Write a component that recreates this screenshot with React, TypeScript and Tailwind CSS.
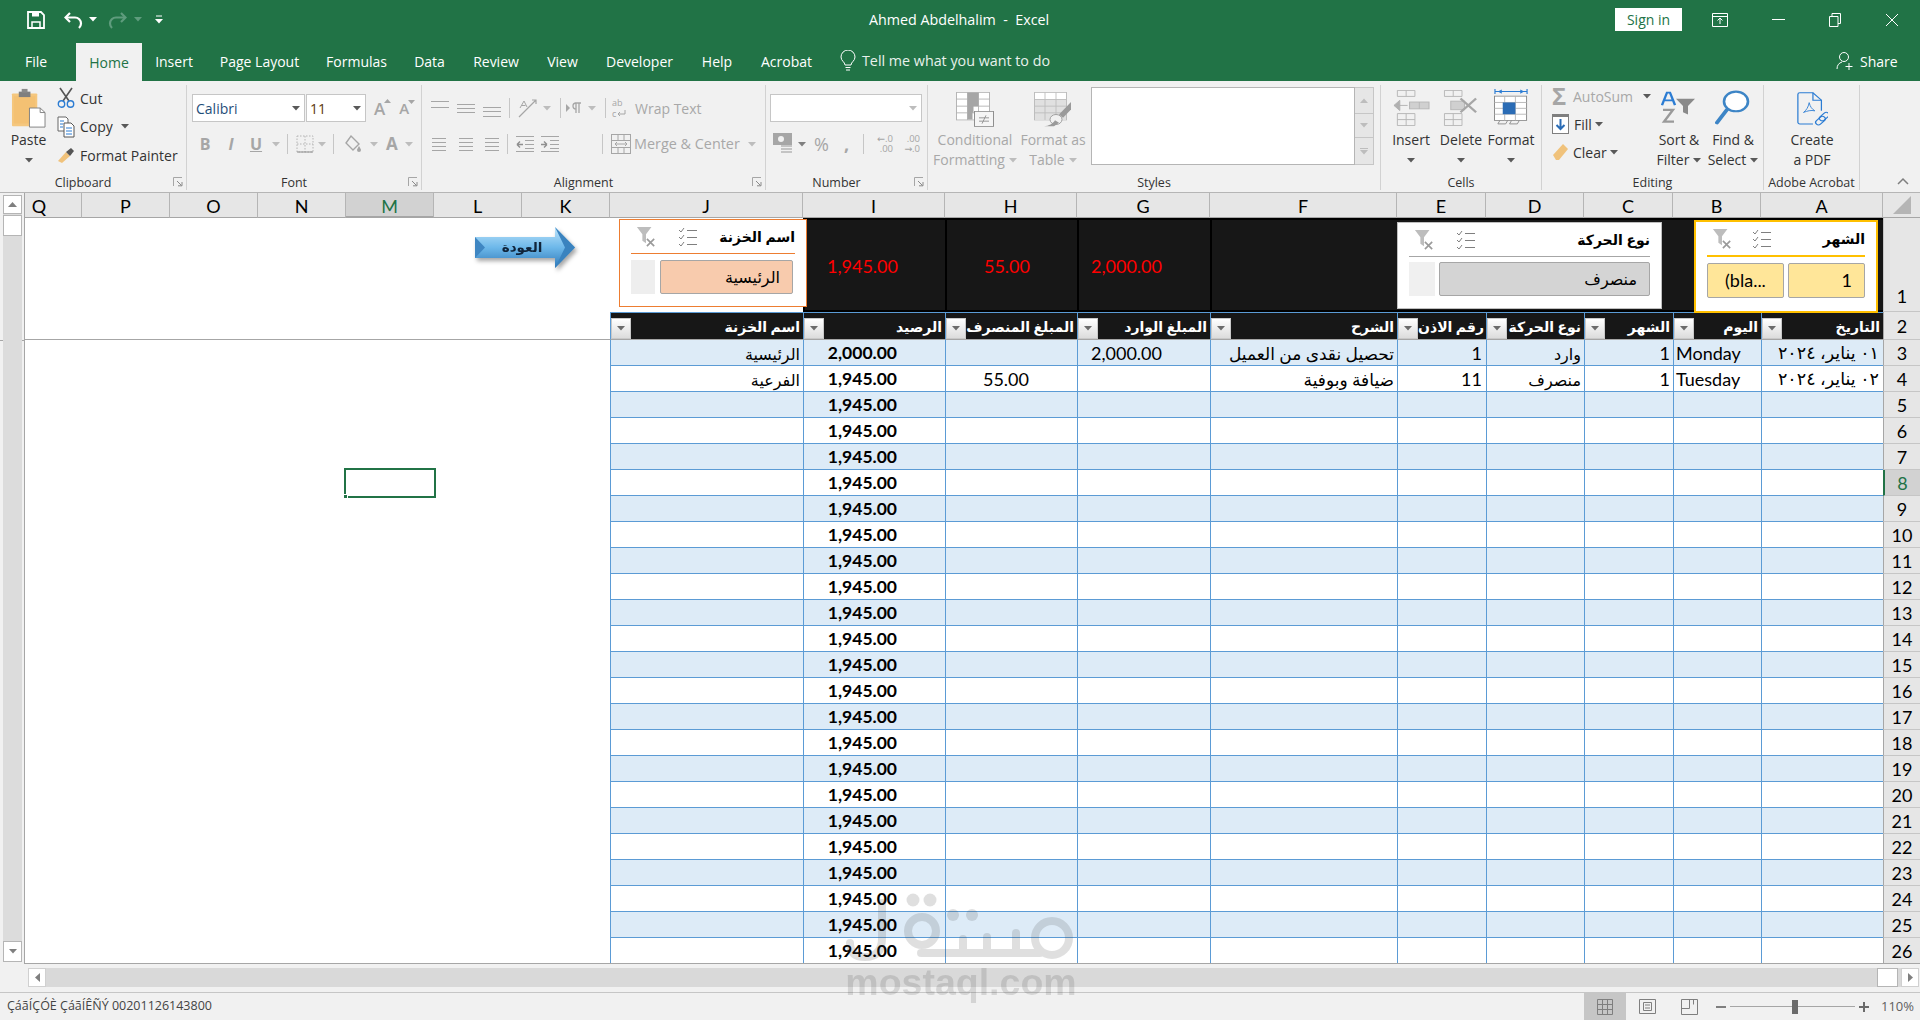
import React from "react";

const G = "#a6a6a6";
const cols = ["Q","P","O","N","M","L","K","J","I","H","G","F","E","D","C","B","A"];
const gridCols = "grid-cols-[57px_88px_88px_88px_88px_88px_88px_193px_142px_132px_133px_187px_89px_98px_89px_88px_122px_37px]";

const Caret = ({ c = "#595959", className = "" }: { c?: string; className?: string }) => (
  <svg width="8" height="5" viewBox="0 0 8 5" className={className}><path d="M0 0h8L4 4.5z" fill={c} /></svg>
);
const Dim = ({ className = "" }: { className?: string }) => <Caret c="#bdbdbd" className={className} />;
const VSep = ({ className = "" }: { className?: string }) => <div className={"w-px h-[20px] bg-[#c6c6c6] " + className} />;

const Lines = ({ ys, w = 20, h = 20, x1 = 1, x2 = 19, c = G, className = "" }: { ys: number[]; w?: number; h?: number; x1?: number; x2?: number; c?: string; className?: string }) => (
  <svg width={w} height={h} viewBox={"0 0 " + w + " " + h} className={className}>
    {ys.map((y, i) => <path key={i} d={"M" + x1 + " " + (y + 0.5) + "H" + x2} stroke={c} strokeWidth="1" />)}
  </svg>
);

const Launcher = () => (
  <svg width="10" height="10" viewBox="0 0 10 10" className="absolute right-[3px] top-[2px]">
    <path d="M.5 9V.5H9" stroke="#a6a6a6" fill="none" />
    <path d="M4 4l4.5 4.5M5 8.8h4V5" stroke="#8a8a8a" fill="none" />
  </svg>
);

const Group = ({ w, label, launcher, children }: { w: string; label: string; launcher?: boolean; children: React.ReactNode }) => (
  <div className={w + " h-[105px] flex flex-col border-r border-[#d2d2d2] shrink-0"}>
    <div className="h-[90px] relative">{children}</div>
    <div className={"h-[15px] relative text-center text-[12.5px] leading-[15px] text-[#333] " + (launcher ? "pr-[20px]" : "")}>
      {label}
      {launcher && <Launcher />}
    </div>
  </div>
);

const Tall = ({ w, icon, l1, l2, dim, caret, className = "" }: { w: string; icon: React.ReactNode; l1: string; l2?: string; dim?: boolean; caret?: boolean; className?: string }) => (
  <div className={w + " flex flex-col items-center shrink-0 text-[14px] leading-[20px] whitespace-nowrap " + (dim ? "text-[#a8a8a8] " : "text-[#333] ") + className}>
    <div className="h-[45px] flex items-center justify-center">{icon}</div>
    <div className="h-[20px]">{l1}</div>
    <div className="h-[20px] flex items-center justify-center gap-[4px]">
      {l2}
      {caret && (dim ? <Dim /> : <Caret />)}
    </div>
  </div>
);

const PasteIcon = () => (
  <svg width="35" height="40" viewBox="0 0 36 44" preserveAspectRatio="none">
    <rect x="1" y="6" width="26" height="36" rx="1" fill="#f5c77e" />
    <path d="M3 9h22v30H3z" fill="#f4bf6f" opacity=".7" />
    <path d="M8 4h12v6H8z" fill="#7f7f7f" />
    <rect x="11" y="1" width="6" height="4" fill="#8a8a8a" />
    <path d="M19 22h11l5 5v16H19z" fill="#fff" stroke="#7f7f7f" />
    <path d="M30 22v5h5" fill="none" stroke="#7f7f7f" />
  </svg>
);
const CutIcon = () => (
  <svg width="18" height="22" viewBox="0 0 18 22">
    <path d="M3 1l9 13M15 1L6 14" stroke="#555" strokeWidth="1.6" />
    <circle cx="4.5" cy="17" r="3.2" fill="none" stroke="#2b7cd3" strokeWidth="1.4" />
    <circle cx="13.5" cy="17" r="3.2" fill="none" stroke="#2b7cd3" strokeWidth="1.4" />
  </svg>
);
const CopyIcon = () => (
  <svg width="18" height="22" viewBox="0 0 18 22" fill="none">
    <path d="M1 1h8l2 2v12H1z" fill="#fff" stroke="#666" />
    <path d="M7 7h7l3 3v11H7z" fill="#fff" stroke="#555" />
    <path d="M3 5h4M3 8h3M3 11h3M9 12h6M9 15h6M9 18h6" stroke="#2b7cd3" />
  </svg>
);
const PainterIcon = () => (
  <svg width="18" height="18" viewBox="0 0 18 18">
    <path d="M1 15l8-9 4 4-8 7z" fill="#f0c27b" />
    <path d="M9 6l4 4 4-5-3-3z" fill="#555" />
  </svg>
);
const BigA = ({ up }: { up: boolean }) => (
  <div className={"relative font-semibold leading-none text-[#a6a6a6] " + (up ? "text-[17px]" : "text-[15px]")}>
    A
    <svg width="7" height="4" viewBox="0 0 7 4" className="absolute -right-[6px] -top-[1px]"><path d={up ? "M0 4h7L3.5 0z" : "M0 0h7L3.5 4z"} fill="#a6a6a6" /></svg>
  </div>
);
const BordersIcon = () => (
  <svg width="18" height="20" viewBox="0 0 18 20" fill="none" className="ml-[8px]"><path d="M1 2h16v16H1zM9 2v16M1 10h16" stroke="#b5b5b5" strokeDasharray="1.5 1.5" /><path d="M1 18h16" stroke="#8f8f8f" /></svg>
);
const FillIcon = () => (
  <svg width="20" height="20" viewBox="0 0 20 20" fill="none"><path d="M8 2l8 8-6 6-7-7z" stroke="#a6a6a6" strokeWidth="1.4" /><path d="M16 12c1 2 2 3 2 4a2 2 0 01-4 0c0-1 1-2 2-4z" fill="#a6a6a6" /></svg>
);
const OrientIcon = () => (
  <svg width="22" height="22" viewBox="0 0 22 22" fill="none" className="ml-[7px]"><path d="M2 20L19 3M15 3h4v4" stroke="#a6a6a6" strokeWidth="1.2" /><path d="M3 11l4-7 3 6M4.500 8.500h4" stroke="#a6a6a6" /></svg>
);
const RtlIcon = () => (
  <svg width="16" height="14" viewBox="0 0 16 14" className="ml-[5px]"><path d="M0 3l4 4-4 4z" fill="#a6a6a6" /><path d="M9 2h6M10 2v10M13 2v10M10 2a3 3 0 000 6" stroke="#a6a6a6" fill="none" strokeWidth="1.3" /></svg>
);
const WrapIcon = () => (
  <div className="text-[#a6a6a6] text-[9px] leading-[11px] w-[18px]">
    <div>ab</div>
    <div className="flex items-center">c<svg width="9" height="8" viewBox="0 0 9 8" fill="none" className="ml-[1px]"><path d="M8 0v4H1M1 4l2-2M1 4l2 2" stroke="#a6a6a6" /></svg></div>
  </div>
);
const MergeIcon = () => (
  <svg width="20" height="22" viewBox="0 0 20 22" fill="none" stroke="#a6a6a6"><rect x=".5" y="1.5" width="19" height="19" /><path d="M.5 7.5h19M.5 14.5h19M7 1.5v6M13 1.5v6M7 14.5v6M13 14.5v6" /><path d="M4 11h12M4 11l2-2M4 11l2 2M16 11l-2-2M16 11l-2 2" /></svg>
);
const IndentIcon = ({ rev }: { rev?: boolean }) => (
  <svg width="20" height="18" viewBox="0 0 20 18" fill="none" stroke="#a6a6a6"><path d="M1 1.5h18M10 5.5h9M10 9.5h9M10 13.5h9M1 16.5h18" /><path d={rev ? "M2 9.5h6M2 9.5l3-3M2 9.5l3 3" : "M1 9.5h6M7 9.5l-3-3M7 9.5l-3 3"} stroke="#8f8f8f" strokeWidth="1.4" /></svg>
);
const CurrencyIcon = () => (
  <svg width="20" height="24" viewBox="0 0 20 24"><rect x="0" y="1" width="19" height="12" fill="#a6a6a6" /><circle cx="8" cy="7" r="3" fill="#f1f1f1" /><path d="M8 14h11M8 17h11M8 20h11" stroke="#c4c4c4" strokeWidth="2" /></svg>
);
const DecIcon = ({ a, b, left }: { a: string; b: string; left?: boolean }) => (
  <div className="relative text-[#a6a6a6] text-[9.5px] leading-[10px] w-[22px] text-right">
    <div>{left ? <span>←{a}</span> : a}</div>
    <div>{left ? b : <span>→{b}</span>}</div>
  </div>
);
const CfIcon = () => (
  <svg width="38" height="35" viewBox="0 0 38 42" preserveAspectRatio="none" className="mt-[4px]">
    <g fill="none" stroke="#b5b5b5"><rect x=".5" y=".5" width="33" height="33" fill="#fff" /><path d="M11.5.5v33M22.5.5v33M.5 8.5h33M.5 17h33M.5 25h33" /></g>
    <path d="M11.5 .5h11v8h-11zM11.5 8.5h11v8.5h-11zM11.5 17h6v8h-6zM11.5 25h5v8h-5z" fill="#a6a6a6" />
    <rect x="18.5" y="23.5" width="19" height="18" fill="#f5f5f5" stroke="#8f8f8f" />
    <path d="M23 31h10M23 35h10M30 28l-4 10" stroke="#8f8f8f" fill="none" />
  </svg>
);
const FatIcon = () => (
  <svg width="38" height="35" viewBox="0 0 38 42" preserveAspectRatio="none" className="mt-[4px]">
    <g stroke="#bdbdbd" fill="#fff"><rect x=".5" y=".5" width="32" height="33" /></g>
    <path d="M1 9h31v24H1z" fill="#e0e0e0" />
    <path d="M11 .5v33M22 .5v33M.5 9h32M.5 17h32M.5 25h32" stroke="#bdbdbd" fill="none" />
    <path d="M37 12L25 27l4 4 8-10z" fill="#9a9a9a" />
    <circle cx="22" cy="33" r="6" fill="#f1f1f1" stroke="#9a9a9a" />
    <path d="M10 41c5 0 9-3 11-7l4 3-5 4z" fill="#9a9a9a" />
  </svg>
);
const InsertIcon = () => (
  <svg width="37" height="36" viewBox="0 0 38 42" preserveAspectRatio="none" fill="none" stroke="#b5b5b5">
    <path d="M4.500 .5h18v7h-18zM13.500 .5v7M4.500 27.500h18v14h-18zM4.500 34.500h18M13.500 27.500v14" />
    <rect x="17" y="14" width="20" height="8" fill="#d0d0d0" /><path d="M27 14v8" />
    <path d="M1 18h14M1 18l6-6v12z" stroke="#b0b0b0" fill="#b0b0b0" strokeWidth="1" />
  </svg>
);
const DeleteIcon = () => (
  <svg width="37" height="36" viewBox="0 0 38 42" preserveAspectRatio="none" fill="none" stroke="#b5b5b5">
    <path d="M1.500 .5h18v7h-18zM10.500 .5v7M1.500 27.500h18v14h-18zM1.500 34.500h18M10.500 27.500v14" />
    <rect x="8" y="13" width="14" height="10" fill="#d0d0d0" />
    <path d="M18 10l16 16M34 10L18 26" stroke="#a6a6a6" strokeWidth="2.400" />
  </svg>
);
const FormatIcon = () => (
  <svg width="35" height="37" viewBox="0 0 36 44" preserveAspectRatio="none" fill="none">
    <path d="M1 0v6M34 0v6M1 3h33" stroke="#2b7cd3" strokeWidth="1.200" />
    <path d="M4 3l4-2.500v5zM31 3l-4-2.500v5z" fill="#2b7cd3" />
    <rect x=".5" y="8.500" width="33" height="29" fill="#fff" stroke="#8a8a8a" />
    <path d="M11 8.500v29M22 8.500v29M.5 16h33M.5 23h33M.5 30h33" stroke="#b5b5b5" />
    <rect x="9" y="16" width="13" height="14" fill="#2b6cb5" />
    <path d="M6 37.500l-2 4h8l2-4M18 37.500l-2 4h8l2-4" stroke="#8a8a8a" />
  </svg>
);
const SortIcon = () => (
  <svg width="36" height="33" viewBox="0 0 36 42" preserveAspectRatio="none">
    <path d="M1 18L6 2h3l5 16M3.500 12h8" stroke="#2b7cd3" strokeWidth="2.400" fill="none" />
    <path d="M2 24h10L3 39h10" stroke="#9a9a9a" strokeWidth="2.600" fill="none" />
    <path d="M15 10h19l-7 9v11l-5-3v-8z" fill="#8a8a8a" />
  </svg>
);
const FindIcon = () => (
  <svg width="36" height="36" viewBox="0 0 36 44" preserveAspectRatio="none" fill="none">
    <circle cx="21" cy="14" r="12" stroke="#3d85c6" strokeWidth="2.600" fill="#fff" />
    <path d="M12 24L2 40" stroke="#3d85c6" strokeWidth="4" strokeLinecap="round" />
  </svg>
);
const PdfIcon = () => (
  <svg width="32" height="36" viewBox="0 0 34 44" preserveAspectRatio="none" fill="none" stroke="#2b7cd3" strokeWidth="1.300" className="mt-[4px]">
    <path d="M18 39H4a2 2 0 01-2-2V3a2 2 0 012-2h14l9 9v13" />
    <path d="M18 1v9h9" />
    <path d="M14 13c-1 6-3 9-6 12 4-2 8-3 12-2-3-2-5-5-6-10z" strokeWidth="1" />
    <rect x="20" y="32" width="12" height="6" rx="3" transform="rotate(-45 26 35)" />
    <rect x="24" y="27" width="12" height="6" rx="3" transform="rotate(-45 30 30)" />
  </svg>
);

const FilterClear = () => (
  <svg width="20" height="22" viewBox="0 0 22 24">
    <path d="M1 1h16l-6 8v10l-4-3V9z" fill="#bdbdbd" />
    <path d="M12 14l8 8M20 14l-8 8" stroke="#9a9a9a" strokeWidth="1.800" />
  </svg>
);
const MultiSel = () => (
  <svg width="20" height="22" viewBox="0 0 20 22" fill="none" stroke="#7f7f7f">
    <path d="M1 4l2 2 3-4M1 11l2 2 3-4M1 18l2 2 3-4" />
    <path d="M9 4.500h10M9 11.500h10M9 18.500h10" />
  </svg>
);
const SortBtn = () => (
  <div className="w-[20px] h-[21px] bg-gradient-to-b from-white to-[#dcdcdc] border border-[#c9c9c9] flex items-center justify-center shrink-0">
    <Caret c="#6b6b6b" />
  </div>
);

const Slicer = ({ title, className, accent, children, iconGap }: { title: string; className: string; accent: string; children: React.ReactNode; iconGap: string }) => (
  <div className={"absolute bg-white px-[11px] flex flex-col " + className}>
    <div dir="rtl" className="h-[33px] flex items-center justify-between shrink-0">
      <span className="font-bold text-[14px] text-black">{title}</span>
      <span dir="ltr" className={"ml-[5px] flex items-center flex-row-reverse " + iconGap}>
        <MultiSel />
        <FilterClear />
      </span>
    </div>
    <div className={accent} />
    {children}
  </div>
);

type Row = { a?: string; b?: string; c?: string; d?: string; e?: string; f?: string; g?: string; h?: string; i: string; j?: string };
const data: Row[] = [
  { a: "٠١ يناير، ٢٠٢٤", b: "Monday", c: "1", d: "وارد", e: "1", f: "تحصيل نقدى من العميل", g: "2,000.00", i: "2,000.00", j: "الرئيسية" },
  { a: "٠٢ يناير، ٢٠٢٤", b: "Tuesday", c: "1", d: "منصرف", e: "11", f: "ضيافة وبوفية", h: "55.00", i: "1,945.00", j: "الفرعية" },
  ...Array.from({ length: 22 }, () => ({ i: "1,945.00" })),
];

const headers = ["اسم الخزنة", "الرصيد", "المبلغ المنصرف", "المبلغ الوارد", "الشرح", "رقم الاذن", "نوع الحركة", "الشهر", "اليوم", "التاريخ"];

const Cell = ({ children, className = "" }: { children?: React.ReactNode; className?: string }) => (
  <div className={"border-l border-b border-[#5b9bd5] pt-[2px] flex items-center overflow-hidden whitespace-nowrap " + className}>{children}</div>
);
const RowHead = ({ n, sel, className = "" }: { n: number; sel?: boolean; className?: string }) => (
  <div className={"border-b border-[#c6c6c6] pt-[2px] flex justify-center items-center text-[18px] " + (sel ? "bg-[#d2d2d2] text-[#217346] border-l-2 border-l-[#217346] " : "bg-[#e6e6e6] text-black border-l border-l-[#a6a6a6] ") + className}>{n}</div>
);

export default function App() {
  return (
    <div className="relative w-[1920px] h-[1020px] overflow-hidden bg-[#f1f1f1] flex flex-col font-['Open_Sans','DejaVu_Sans',sans-serif]">
      {/* Title bar */}
      <div className="h-[43px] pb-[4px] bg-[#217346] flex items-center text-white shrink-0">
        <svg width="18" height="18" viewBox="0 0 18 18" fill="none" className="ml-[27px]"><path d="M1 1h13l3 3v13H1z" stroke="#fff" strokeWidth="1.800" /><path d="M5 1.500h7v4H5z" fill="#fff" /><path d="M5 11h8v6H5z" stroke="#fff" strokeWidth="1.500" /></svg>
        <svg width="20" height="18" viewBox="0 0 20 18" fill="none" className="ml-[19px]"><path d="M6 2L1.500 6.500 6 11" stroke="#fff" strokeWidth="2.200" /><path d="M2 6.500h9a6 6 0 016 6c0 2-1 3.500-2 4.500" stroke="#fff" strokeWidth="2.200" /></svg>
        <Caret c="#fff" className="ml-[5px]" />
        <svg width="20" height="18" viewBox="0 0 20 18" fill="none" className="ml-[10px]"><path d="M14 2l4.500 4.500L14 11" stroke="#5f9c7d" strokeWidth="2.200" /><path d="M18 6.500H9a6 6 0 00-6 6c0 2 1 3.500 2 4.500" stroke="#5f9c7d" strokeWidth="2.200" /></svg>
        <Caret c="#5f9c7d" className="ml-[7px]" />
        <svg width="8" height="10" viewBox="0 0 8 10" className="ml-[13px]"><path d="M1 1h6" stroke="#fff" /><path d="M0 4h8L4 8.500z" fill="#fff" /></svg>
        <div className="ml-[704px] w-[184px] text-center text-[14.3px] whitespace-pre">Ahmed Abdelhalim  -  Excel</div>
        <div className="ml-[564px] w-[67px] h-[23px] bg-white text-[#217346] text-[14px] leading-[23px] text-center">Sign in</div>
        <svg width="16" height="14" viewBox="0 0 16 14" fill="none" className="ml-[30px]"><path d="M.5.5h15v13H.5zM.5 3.500h15" stroke="#fff" /><path d="M8 11V5M5.500 7.500L8 5l2.500 2.500" stroke="#fff" /></svg>
        <div className="ml-[44px] w-[13px] h-px bg-white" />
        <svg width="12" height="14" viewBox="0 0 12 14" fill="none" className="ml-[44px]"><path d="M.5 3.500h8.500v10H.5zM3 3.500v-3h8.500v10H9" stroke="#fff" /></svg>
        <svg width="14" height="14" viewBox="0 0 14 14" fill="none" className="ml-[44px]"><path d="M1 1l12 12M13 1L1 13" stroke="#fff" /></svg>
      </div>
      {/* Tabs */}
      <div className="h-[38px] pb-[2px] bg-[#217346] flex items-stretch text-white text-[14px] shrink-0 relative">
        {([["File","w-[76px] pr-[4px]"],["Home","w-[66px]"],["Insert","w-[64px]"],["Page Layout","w-[107px]"],["Formulas","w-[87px]"],["Data","w-[59px]"],["Review","w-[74px]"],["View","w-[59px]"],["Developer","w-[95px]"],["Help","w-[60px]"],["Acrobat","w-[79px]"]] as [string,string][]).map(([t, w]) => (
          <div key={t} className={w + " flex items-center justify-center " + (t === "Home" ? "bg-[#f1f1f1] text-[#217346] h-[38px]" : "")}>{t}</div>
        ))}
        <svg width="16" height="22" viewBox="0 0 16 22" fill="none" className="ml-[14px] self-center"><path d="M5 15c0-3-4-4-4-8a7 7 0 0114 0c0 4-4 5-4 8z" stroke="#fff" /><path d="M5.500 17.500h5M6 20h4" stroke="#fff" /></svg>
        <div className="ml-[6px] w-[188px] whitespace-nowrap self-center text-[14.3px] text-[#e8f1ec]">Tell me what you want to do</div>
        <svg width="18" height="20" viewBox="0 0 18 20" fill="none" className="ml-[786px] self-center"><circle cx="8" cy="6" r="4.500" stroke="#fff" /><path d="M1 18c0-4 2-6 5-7M13 12v7M9.500 15.500h7" stroke="#fff" /></svg>
        <div className="ml-[6px] self-center">Share</div>
      </div>
      {/* Ribbon */}
      <div className="h-[112px] pt-[4px] bg-[#f1f1f1] border-b border-[#b5b5b5] flex items-start shrink-0 relative">
        <Group w="w-[187px]" label="Clipboard" launcher>
          <div className="flex">
            <Tall w="w-[57px]" icon={<PasteIcon />} l1="Paste" caret />
            <div className="flex flex-col text-[14px] text-[#333]">
              <div className="h-[28px] mt-[-1px] flex items-center"><CutIcon /><span className="ml-[5px]">Cut</span></div>
              <div className="h-[29px] flex items-center"><CopyIcon /><span className="ml-[5px]">Copy</span><Caret className="ml-[8px]" /></div>
              <div className="h-[28px] flex items-center"><PainterIcon /><span className="ml-[5px] whitespace-nowrap">Format Painter</span></div>
            </div>
          </div>
        </Group>
        <Group w="w-[235px]" label="Font" launcher>
          <div className="mt-[9px] ml-[5px] h-[28px] flex items-center">
            <div className="w-[113px] h-full bg-white border border-[#c6c6c6] flex items-center justify-between pl-[3px] pr-[4px] text-[14px] text-[#1f4e79]">Calibri<Caret /></div>
            <div className="w-[60px] ml-[1px] h-full bg-white border border-[#c6c6c6] flex items-center justify-between pl-[3px] pr-[4px] text-[14px] text-[#5a3a10]">11<Caret /></div>
            <div className="ml-[8px]"><BigA up /></div>
            <div className="ml-[14px]"><BigA up={false} /></div>
          </div>
          <div className="mt-[8px] h-[28px] flex items-center text-[#a6a6a6] text-[16px]">
            <span className="ml-[10px] font-bold w-[16px] text-center">B</span>
            <span className="ml-[12px] font-bold italic w-[12px] text-center">I</span>
            <span className="ml-[11px] font-bold underline w-[16px] text-center">U</span>
            <Dim className="ml-[8px]" />
            <VSep className="ml-[7px]" />
            <BordersIcon />
            <Dim className="ml-[4px]" />
            <VSep className="ml-[7px]" />
            <div className="ml-[9px]"><FillIcon /></div>
            <Dim className="ml-[7px]" />
            <span className="ml-[8px] font-bold text-[17px]">A</span>
            <Dim className="ml-[7px]" />
          </div>
        </Group>
        <Group w="w-[344px]" label="Alignment" launcher>
          <div className="mt-[9px] h-[28px] flex items-center">
            <Lines ys={[3, 9]} className="ml-[8px]" />
            <Lines ys={[6, 10, 14]} className="ml-[6px]" />
            <Lines ys={[9, 13, 18]} className="ml-[6px]" />
            <VSep className="ml-[7px]" />
            <OrientIcon />
            <Dim className="ml-[4px]" />
            <VSep className="ml-[9px]" />
            <RtlIcon />
            <Dim className="ml-[6px]" />
            <VSep className="ml-[9px]" />
            <div className="ml-[6px]"><WrapIcon /></div>
            <span className="ml-[5px] text-[14px] text-[#a8a8a8] whitespace-nowrap">Wrap Text</span>
          </div>
          <div className="mt-[8px] h-[28px] flex items-center">
            <Lines ys={[4, 8, 12, 16]} x2={15} className="ml-[9px]" />
            <Lines ys={[4, 8, 12, 16]} x1={3} x2={17} className="ml-[5px]" />
            <Lines ys={[4, 8, 12, 16]} x1={5} className="ml-[4px]" />
            <VSep className="ml-[7px]" />
            <div className="ml-[7px]"><IndentIcon rev /></div>
            <div className="ml-[5px]"><IndentIcon /></div>
            <VSep className="ml-[42px]" />
            <div className="ml-[8px]"><MergeIcon /></div>
            <span className="ml-[3px] text-[14.4px] text-[#a8a8a8] whitespace-nowrap">Merge &amp; Center</span>
            <Dim className="ml-[8px]" />
          </div>
        </Group>
        <Group w="w-[162px]" label="Number" launcher>
          <div className="mt-[9px] ml-[4px] w-[152px] h-[28px] bg-white border border-[#c6c6c6] flex items-center justify-end pr-[4px]"><Dim /></div>
          <div className="mt-[8px] h-[28px] flex items-center">
            <div className="ml-[7px]"><CurrencyIcon /></div>
            <Caret c="#7f7f7f" className="ml-[5px]" />
            <span className="ml-[8px] text-[#a6a6a6] text-[18px]">%</span>
            <span className="ml-[15px] text-[#a6a6a6] text-[18px] font-bold leading-none">,</span>
            <VSep className="ml-[14px]" />
            <div className="ml-[7px]"><DecIcon a=".0" b=".00" left /></div>
            <div className="ml-[5px]"><DecIcon a=".00" b=".0" /></div>
          </div>
        </Group>
        <Group w="w-[453px]" label="Styles">
          <div className="flex">
            <Tall w="w-[90px]" className="ml-[2px]" icon={<CfIcon />} l1="Conditional" l2="Formatting" dim caret />
            <Tall w="w-[70px]" className="ml-[-2px]" icon={<FatIcon />} l1="Format as" l2="Table" dim caret />
            <div className="w-[264px] h-[78px] mt-[2px] ml-[3px] bg-white border border-[#b5b5b5]" />
            <div className="w-[19px] h-[78px] mt-[2px] flex flex-col border border-l-0 border-[#c6c6c6] bg-[#e6e6e6]">
              <div className="h-[26px] border-b border-[#c6c6c6] flex items-center justify-center"><svg width="8" height="5" viewBox="0 0 8 5"><path d="M0 5h8L4 .5z" fill="#bdbdbd" /></svg></div>
              <div className="h-[24px] border-b border-[#c6c6c6] flex items-center justify-center"><Dim /></div>
              <div className="flex-1 flex flex-col items-center justify-center gap-px"><div className="w-[8px] h-px bg-[#bdbdbd]" /><Dim /></div>
            </div>
          </div>
        </Group>
        <Group w="w-[161px]" label="Cells">
          <div className="flex pl-[5px]">
            <Tall w="w-[50px]" icon={<InsertIcon />} l1="Insert" caret />
            <Tall w="w-[50px]" icon={<DeleteIcon />} l1="Delete" caret />
            <Tall w="w-[50px]" icon={<FormatIcon />} l1="Format" caret />
          </div>
        </Group>
        <Group w="w-[222px]" label="Editing">
          <div className="flex pl-[10px]">
            <div className="w-[108px] mt-[-3px] flex flex-col text-[14px] text-[#333] shrink-0">
              <div className="h-[28px] flex items-center whitespace-nowrap"><span className="w-[16px] text-[24px] leading-none font-bold text-[#a6a6a6]">Σ</span><span className="ml-[5px] text-[#a8a8a8]">AutoSum</span><Caret className="ml-[10px]" /></div>
              <div className="h-[28px] flex items-center"><svg width="17" height="20" viewBox="0 0 17 20" fill="none"><rect x=".5" y=".5" width="16" height="19" fill="#fff" stroke="#7f7f7f" /><path d="M0 0h17v3H0z" fill="#7f7f7f" /><path d="M8.500 5v10M4.500 11l4 4 4-4" stroke="#2b6cb5" strokeWidth="2" /></svg><span className="ml-[5px]">Fill</span><Caret className="ml-[3px]" /></div>
              <div className="h-[28px] flex items-center"><svg width="17" height="18" viewBox="0 0 17 18"><path d="M1 12L11 1l5 5L7 17H4z" fill="#f0c27b" /></svg><span className="ml-[4px]">Clear</span><Caret className="ml-[3px]" /></div>
            </div>
            <Tall w="w-[56px]" className="ml-[-9px]" icon={<SortIcon />} l1="Sort &" l2="Filter" caret />
            <Tall w="w-[52px]" icon={<FindIcon />} l1="Find &" l2="Select" caret />
          </div>
        </Group>
        <Group w="w-[96px]" label="Adobe Acrobat">
          <Tall w="w-[96px]" icon={<PdfIcon />} l1="Create" l2="a PDF" />
        </Group>
        <svg width="12" height="8" viewBox="0 0 12 8" fill="none" className="mt-[92px] ml-[37px]"><path d="M1 7l5-5 5 5" stroke="#7f7f7f" strokeWidth="1.500" /></svg>
      </div>
      {/* Sheet */}
      <div className="h-[771px] flex shrink-0 relative">
        <div className="w-[24px] pl-[3px] pr-[2px] pt-[2px] pb-[2px] flex flex-col shrink-0 relative bg-[#f1f1f1]">
          <div className="flex-1 flex flex-col bg-[#dcdcdc]">
            <div className="h-[19px] bg-white border border-[#b5b5b5] flex items-center justify-center"><svg width="9" height="5" viewBox="0 0 9 5"><path d="M0 5h9L4.500 0z" fill="#7f7f7f" /></svg></div>
            <div className="h-[21px] mt-px bg-white border border-[#b5b5b5]" />
            <div className="flex-1" />
            <div className="h-[21px] bg-white border border-[#b5b5b5] flex items-center justify-center"><Caret c="#7f7f7f" /></div>
          </div>
          <div className="absolute left-0 top-[147px] w-[3px] h-px bg-[#a6a6a6]" />
          <div className="absolute left-[22px] top-[147px] w-[2px] h-px bg-[#a6a6a6]" />
        </div>
        <div className={"w-[1896px] h-[771px] overflow-hidden border-l border-b border-[#a6a6a6] bg-white grid font-['Lato','DejaVu_Sans',sans-serif] " + gridCols + " grid-rows-[25px_94px_28px_repeat(24,26px)]"}>
          {cols.map((c) => (
            <div key={c} className={"flex items-center justify-center pt-[2px] text-[18px] leading-none border-r border-r-[#b5b5b5] border-b border-b-[#a6a6a6] " + (c === "M" ? "bg-[#d2d2d2] text-[#217346] border-b-2 border-b-[#217346]" : "bg-[#e6e6e6] text-black ") + (c === "Q" ? "pr-[28px]" : "")}>{c}</div>
          ))}
          <div className="bg-[#e6e6e6] border-b border-[#a6a6a6] relative flex items-center justify-center">
            <svg width="18" height="18" viewBox="0 0 18 18"><path d="M18 0v18H0z" fill="#b5b5b5" /></svg>
          </div>
          {/* Row 1 */}
          <div className="col-span-8 bg-white" />
          {["1,945.00", "55.00", "2,000.00"].map((v, n) => <div key={n} className={"bg-[#171717] border-2 border-r-0 border-black pt-[2px] flex items-center justify-end text-[18px] text-[#ff0000] " + (n === 2 ? "pr-[48px]" : "pr-[47px]")}>{v}</div>)}
          {[0, 1, 2, 3, 4, 5].map((n) => <div key={n} className={"bg-[#171717] border-t-2 border-b-2 border-black " + (n === 0 ? "border-l-2" : "")} />)}
          <div className="bg-[#e6e6e6] border-b border-l border-[#c6c6c6] flex items-end justify-center pb-px text-[18px]">1</div>
          {/* Row 2 */}
          <div className="col-span-7 bg-white border-b border-[#a6a6a6]" />
          {headers.map((h) => (
            <div key={h} className="bg-[#171717] border-t border-l border-t-[#5b9bd5] border-l-[#5b9bd5] border-b-[#a6a6a6] border-b flex items-end justify-between overflow-hidden whitespace-nowrap">
              <SortBtn />
              <span dir="rtl" className="pr-[3px] pb-px text-white font-bold text-[14px] leading-[22px]">{h}</span>
            </div>
          ))}
          <RowHead n={2} />
          {/* Data */}
          {data.map((r, i) => {
            const n = i + 3;
            const bg = i % 2 === 0 ? "bg-[#ddebf7]" : "bg-white";
            return (
              <React.Fragment key={n}>
                {n === 8 ? (
                  <>
                    <div className="col-span-4 bg-white" />
                    <div className="relative bg-white outline-2 outline-[#217346] z-10">
                      <div className="absolute -left-[3px] -bottom-[3px] w-[5px] h-[5px] bg-[#217346] border border-white" />
                    </div>
                    <div className="col-span-2 bg-white" />
                  </>
                ) : (
                  <div className="col-span-7 bg-white" />
                )}
                <Cell className={bg + " justify-end pr-[3px] text-[16px]"}><span dir="rtl">{r.j}</span></Cell>
                <Cell className={bg + " justify-end pr-[48px] text-[17.5px] font-bold text-black"}>{r.i}</Cell>
                <Cell className={bg + " justify-end pr-[48px] text-[18px]"}>{r.h}</Cell>
                <Cell className={bg + " justify-end pr-[48px] text-[18px]"}>{r.g}</Cell>
                <Cell className={bg + " justify-end pr-[3px] text-[17px]"}><span dir="rtl">{r.f}</span></Cell>
                <Cell className={bg + " justify-end pr-[4px] text-[18px]"}>{r.e}</Cell>
                <Cell className={bg + " justify-end pr-[3px] text-[16px]"}><span dir="rtl">{r.d}</span></Cell>
                <Cell className={bg + " justify-end pr-[3px] text-[18px]"}>{r.c}</Cell>
                <Cell className={bg + " justify-start pl-[2px] text-[18px]"}>{r.b}</Cell>
                <Cell className={bg + " justify-end pr-[4px] text-[17.5px]"}><span dir="rtl">{r.a}</span></Cell>
                <RowHead n={n} sel={n === 8} />
              </React.Fragment>
            );
          })}
        </div>
        {/* Floating slicers and shape */}
        <div className="absolute left-[475px] top-[34px] w-[100px] h-[41px] drop-shadow-[2px_3px_2px_rgba(0,0,0,0.35)]">
          <svg width="100" height="41" viewBox="0 0 100 41">
            <defs>
              <linearGradient id="arw" x1="0" y1="0" x2="0" y2="1"><stop offset="0" stopColor="#bfe4fa" /><stop offset=".5" stopColor="#6db8ea" /><stop offset="1" stopColor="#2f78b8" /></linearGradient>
            </defs>
            <path d="M0 10h80V0l20 20.500L80 41V31H0z" fill="url(#arw)" />
            <path d="M0 10l10 10.500L0 31z" fill="#3f86c2" />
            <path d="M90 20.500L80 0l20 20.500L80 41z" fill="#3a83bf" />
          </svg>
          <div dir="rtl" className="absolute left-[25px] top-[11px] w-[44px] text-center text-[13.5px] leading-[18px] font-bold text-[#10243a]">العودة</div>
        </div>
        <Slicer title="اسم الخزنة" className="left-[619px] top-[26px] w-[188px] h-[88px] border border-[#ed7d31]" accent="bg-[#ed7d31] h-px" iconGap="gap-[22px]">
          <div className="mt-[6px] flex gap-[5px] h-[34px]">
            <div className="w-[24px] bg-[#eeeeee]" />
            <div dir="rtl" className="w-[133px] bg-[#f8cbad] border border-[#a6a6a6] rounded-[2px] flex items-center pr-[12px] text-[16px] text-black">الرئيسية</div>
          </div>
        </Slicer>
        <Slicer title="نوع الحركة" className="left-[1397px] top-[29px] w-[265px] h-[87px] border border-[#bfbfbf]" accent="bg-[#a6a6a6] h-px" iconGap="gap-[22px]">
          <div className="mt-[5px] flex gap-[4px] h-[34px]">
            <div className="w-[26px] bg-[#f0f0f0]" />
            <div dir="rtl" className="w-[212px] bg-[#d4d4d4] border border-[#a6a6a6] rounded-[2px] flex items-center pr-[12px] text-[16px] text-black">منصرف</div>
          </div>
        </Slicer>
        <Slicer title="الشهر" className="left-[1694px] top-[27px] w-[184px] h-[93px] border-2 border-[#ffc000]" accent="bg-[#ffc000] h-[2px]" iconGap="gap-[20px]">
          <div className="mt-[6px] flex gap-[4px] h-[35px]">
            <div className="w-[78px] bg-[#ffe699] border border-[#a6a6a6] rounded-[2px] flex items-center justify-center text-[18px] font-['Lato']">(bla...</div>
            <div className="w-[78px] bg-[#ffe699] border border-[#a6a6a6] rounded-[2px] flex items-center justify-end pr-[12px] text-[18px] font-['Lato']">1</div>
          </div>
        </Slicer>
      </div>
      {/* Horizontal scroll */}
      <div className="mt-[4px] h-[19px] flex shrink-0 pl-[28px] pr-[1px]">
        <div className="w-[18px] bg-white border border-[#d0d0d0] flex items-center justify-center"><svg width="5" height="9" viewBox="0 0 5 9"><path d="M5 0v9L0 4.500z" fill="#7f7f7f" /></svg></div>
        <div className="flex-1 bg-[#d9d9d9] flex justify-end pr-[3px]"><div className="w-[21px] h-full bg-white border border-[#b5b5b5]" /></div>
        <div className="w-[18px] bg-white border border-[#d0d0d0] flex items-center justify-center"><svg width="5" height="9" viewBox="0 0 5 9"><path d="M0 0v9l5-4.500z" fill="#7f7f7f" /></svg></div>
      </div>
      {/* Status bar */}
      <div className="mt-[5px] flex-1 border-t border-[#c6c6c6] flex items-center text-[12.5px] text-[#444]">
        <div className="ml-[7px] w-[1577px] whitespace-nowrap">ÇáãÍÇÓÈ ÇáãÍÊÑÝ 00201126143800</div>
        <div className="w-[42px] h-full bg-[#c6c6c6] flex items-center justify-center">
          <svg width="16" height="16" viewBox="0 0 16 16" fill="none" stroke="#7f7f7f"><path d="M.5.5h15v15H.5zM5.500.5v15M10.500.5v15M.5 5.500h15M.5 10.500h15" /></svg>
        </div>
        <svg width="17" height="15" viewBox="0 0 17 15" fill="none" stroke="#7f7f7f" className="ml-[13px]"><path d="M.5.5h16v14H.5zM4.500 3.500h8v8h-8zM6 6h5M6 9h5" /></svg>
        <svg width="17" height="16" viewBox="0 0 17 16" fill="none" stroke="#7f7f7f" className="ml-[25px]"><path d="M.5.5h16v15H.5zM.5 9.500h8v-9M12.500.5v5" /></svg>
        <div className="ml-[18px] w-[10px] h-[2px] bg-[#7f7f7f]" />
        <div className="ml-[4px] w-[125px] h-px bg-[#a6a6a6] flex items-center"><div className="ml-[62px] w-[6px] h-[14px] bg-[#6b6b6b] shrink-0" /></div>
        <svg width="10" height="10" viewBox="0 0 10 10" className="ml-[4px]"><path d="M5 0v10M0 5h10" stroke="#6b6b6b" strokeWidth="2" /></svg>
        <span className="ml-[12px] text-[13px] text-[#5f5f5f]">110%</span>
      </div>
      {/* Watermark */}
      <div className="absolute left-[845px] top-[893px] w-[232px] pointer-events-none opacity-[0.17]">
        <svg width="232" height="72" viewBox="0 0 232 72" fill="none" stroke="#4a4a4a" strokeWidth="8" strokeLinecap="round">
          <circle cx="207" cy="45" r="17" />
          <path d="M76 60H195M171 58V40M142 58V44M118 58V46" />
          <circle cx="77" cy="38" r="14" />
          <path d="M37 10V45Q37 64 20 64Q5 64 5 50" />
          <g fill="#4a4a4a" stroke="none"><circle cx="108" cy="22" r="6" /><circle cx="127" cy="22" r="6" /><circle cx="68" cy="7" r="6.500" /><circle cx="85" cy="7" r="6.500" /></g>
        </svg>
        <div className="font-['Liberation_Sans'] font-bold text-[37.5px] leading-[34px] text-[#4a4a4a] text-center whitespace-nowrap">mostaql.com</div>
      </div>
    </div>
  );
}
